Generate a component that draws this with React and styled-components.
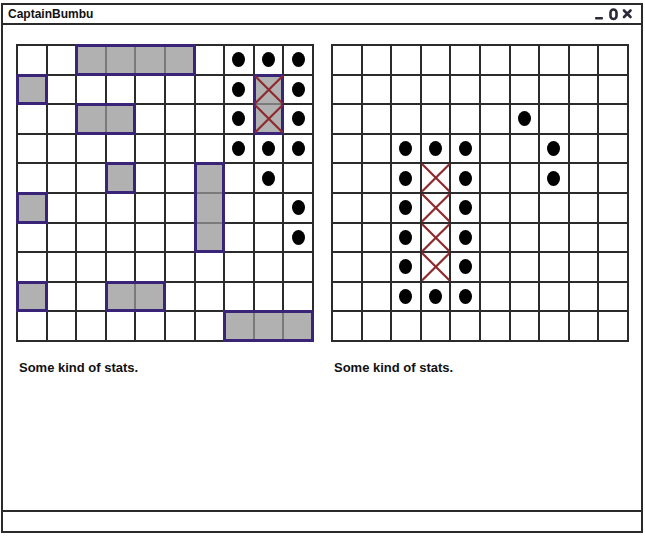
import styled, { createGlobalStyle } from "styled-components";

const INK = "#2b2b2b";

const GlobalStyle = createGlobalStyle`
    html, body {
        margin: 0;
        padding: 0;
        background: #fff;
    }
    body {
        font-family: "Liberation Sans", Arial, sans-serif;
        color: #111;
    }
`;

const leftBoard = {
    ships: [
        { r: 0, c: 2, w: 4, h: 1 },
        { r: 1, c: 0, w: 1, h: 1 },
        { r: 2, c: 2, w: 2, h: 1 },
        { r: 4, c: 3, w: 1, h: 1 },
        { r: 4, c: 6, w: 1, h: 3 },
        { r: 5, c: 0, w: 1, h: 1 },
        { r: 8, c: 0, w: 1, h: 1 },
        { r: 8, c: 3, w: 2, h: 1 },
        { r: 9, c: 7, w: 3, h: 1 },
        { r: 1, c: 8, w: 1, h: 2 },
    ],
    misses: [
        [0, 7], [0, 8], [0, 9],
        [1, 7], [1, 9],
        [2, 7], [2, 9],
        [3, 7], [3, 8], [3, 9],
        [4, 8], [5, 9], [6, 9],
    ],
    hits: [[1, 8], [2, 8]],
};

const rightBoard = {
    ships: [],
    misses: [
        [2, 6],
        [3, 2], [3, 3], [3, 4], [3, 7],
        [4, 2], [4, 4], [4, 7],
        [5, 2], [5, 4],
        [6, 2], [6, 4],
        [7, 2], [7, 4],
        [8, 2], [8, 3], [8, 4],
    ],
    hits: [[4, 3], [5, 3], [6, 3], [7, 3]],
};

const cells = Array.from({ length: 100 }, (_, i) => i);

const Board = ({ ships, misses, hits }) => (
    <StyledBoard>
        <StyledCellLayer>
            {cells.map((i) => <StyledCell key={i} />)}
        </StyledCellLayer>
        <StyledMarkLayer>
            {ships.map((s, i) => (
                <StyledShip key={"s" + i} $r={s.r} $c={s.c} $w={s.w} $h={s.h} />
            ))}
            {misses.map(([r, c]) => (
                <StyledDot key={"m" + r + c} $r={r} $c={c} />
            ))}
            {hits.map(([r, c]) => (
                <StyledHit key={"h" + r + c} $r={r} $c={c} viewBox="0 0 10 10" preserveAspectRatio="none">
                    <line x1="0" y1="0" x2="10" y2="10" />
                    <line x1="10" y1="0" x2="0" y2="10" />
                </StyledHit>
            ))}
        </StyledMarkLayer>
    </StyledBoard>
);

const WindowControls = () => (
    <StyledControls viewBox="0 0 42 14">
        <rect x="1" y="9" width="8" height="2.6" rx="1" fill="#2a2a38" />
        <rect x="16.5" y="1.5" width="6" height="9.5" rx="3" fill="none" stroke="#2a2a38" strokeWidth="2.6" />
        <path d="M30 2.5 L36.5 9 M36.5 2.5 L30 9" stroke="#2a2a38" strokeWidth="2.6" strokeLinecap="round" />
    </StyledControls>
);

export default function App() {
    return (
        <>
            <GlobalStyle />
            <StyledWindow>
                <StyledTitleBar>
                    <StyledTitle>CaptainBumbu</StyledTitle>
                    <WindowControls />
                </StyledTitleBar>
                <StyledBody>
                    <StyledPanel>
                        <Board {...leftBoard} />
                        <StyledStats>Some kind of stats.</StyledStats>
                    </StyledPanel>
                    <StyledPanel>
                        <Board {...rightBoard} />
                        <StyledStats>Some kind of stats.</StyledStats>
                    </StyledPanel>
                </StyledBody>
                <StyledStatusBar />
            </StyledWindow>
        </>
    );
}

const StyledWindow = styled.div`
    margin: 3px 0 0 1px;
    width: 642px;
    height: 530px;
    box-sizing: border-box;
    border: 2px solid ${INK};
    display: flex;
    flex-direction: column;
`;

const StyledTitleBar = styled.div`
    height: 20px;
    box-sizing: border-box;
    border-bottom: 2px solid ${INK};
    display: flex;
    align-items: center;
    justify-content: space-between;
    padding: 0 5px 0 5px;
`;

const StyledTitle = styled.span`
    font-size: 12px;
    font-weight: 700;
    line-height: 18px;
`;

const StyledControls = styled.svg`
    width: 42px;
    height: 14px;
    margin-top: 1px;
`;

const StyledBody = styled.div`
    flex: 1;
    display: flex;
    gap: 17px;
    padding: 19px 0 0 13px;
`;

const StyledPanel = styled.div`
    display: flex;
    flex-direction: column;
`;

const StyledBoard = styled.div`
    display: grid;
    width: 298px;
    height: 296px;
`;

const layer = `
    grid-area: 1 / 1;
    display: grid;
    grid-template-columns: repeat(10, 1fr);
    grid-template-rows: repeat(10, 1fr);
    gap: 2px;
    padding: 2px;
`;

const StyledCellLayer = styled.div`
    ${layer}
    background: ${INK};
`;

const StyledCell = styled.div`
    background: #fff;
`;

const StyledMarkLayer = styled.div`
    ${layer}
`;

const StyledShip = styled.div`
    grid-column: ${(p) => p.$c + 1} / span ${(p) => p.$w};
    grid-row: ${(p) => p.$r + 1} / span ${(p) => p.$h};
    margin: -2px;
    border: 3px solid #3a2478;
    background: rgba(150, 150, 150, 0.74);
`;

const StyledDot = styled.span`
    grid-column: ${(p) => p.$c + 1};
    grid-row: ${(p) => p.$r + 1};
    justify-self: center;
    align-self: center;
    width: 13px;
    height: 15px;
    border-radius: 50%;
    background: #000;
`;

const StyledHit = styled.svg`
    grid-column: ${(p) => p.$c + 1};
    grid-row: ${(p) => p.$r + 1};
    width: 100%;
    height: 100%;
    stroke: #8e2a2e;
    stroke-width: 2.2px;
    vector-effect: non-scaling-stroke;
    overflow: visible;

    line {
        vector-effect: non-scaling-stroke;
    }
`;

const StyledStats = styled.div`
    margin-top: 20px;
    padding-left: 3px;
    font-size: 13px;
    font-weight: 700;
    line-height: 16px;
`;

const StyledStatusBar = styled.div`
    height: 19px;
    border-top: 2px solid ${INK};
`;
